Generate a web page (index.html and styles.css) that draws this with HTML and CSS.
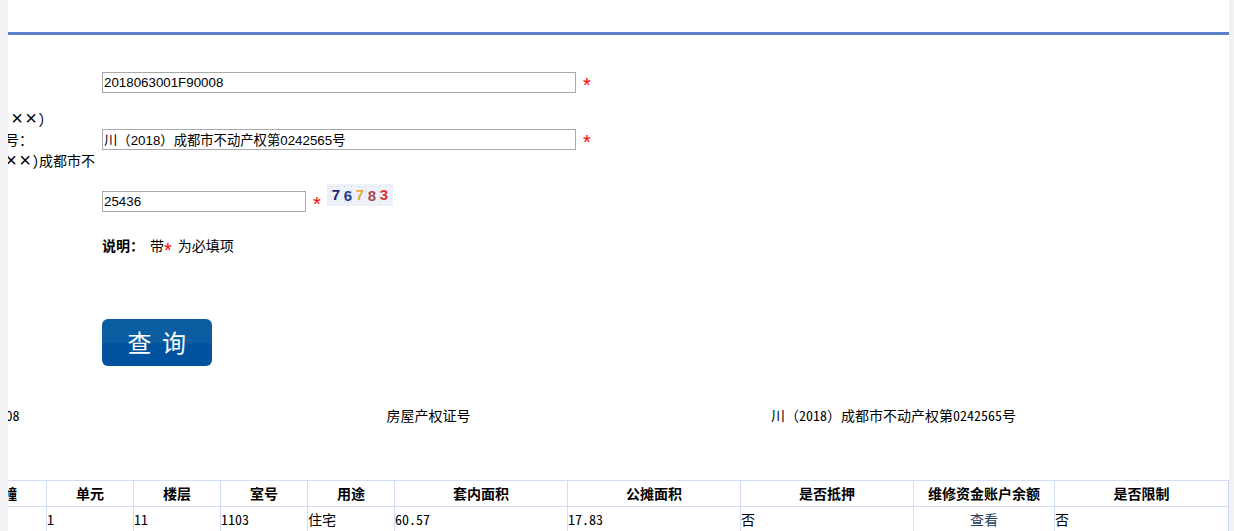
FILE: index.html
```html
<!DOCTYPE html>
<html lang="zh-CN">
<head>
<meta charset="utf-8">
<title>不动产权证查询</title>
<link rel="stylesheet" href="styles.css">
</head>
<body>
<main class="page">
  <header class="topbar"></header>
  <form class="form">
    <div class="row row-first">
      <div class="label"></div>
      <div class="field">
        <input class="input input-wide" value="2018063001F90008">
        <span class="req">*</span>
      </div>
    </div>
    <div class="row row-cert">
      <div class="label">
        <div class="label-line line-a"><span>(<span class="x">×</span><span class="x">×</span><span class="x">×</span><span class="x">×</span>)</span></div>
        <div class="label-line line-b"><span>不动产权证号：</span></div>
        <div class="label-line line-c"><span>(<span class="x">×</span><span class="x">×</span><span class="x">×</span><span class="x">×</span>)成都市不</span></div>
      </div>
      <div class="field">
        <input class="input input-wide" value="川（2018）成都市不动产权第0242565号">
        <span class="req">*</span>
      </div>
    </div>
    <div class="row row-code">
      <div class="label"></div>
      <div class="field">
        <input class="input input-short" value="25436">
        <span class="req">*</span>
        <div class="captcha">
          <span class="d1">7</span><span class="d2">6</span><span class="d3">7</span><span class="d4">8</span><span class="d5">3</span>
        </div>
      </div>
    </div>
    <div class="row row-note">
      <div class="label"></div>
      <div class="note"><b class="note-title">说明：</b><span>带</span><span class="note-star">*</span><span class="note-rest">为必填项</span></div>
    </div>
    <div class="row row-btn">
      <div class="label"></div>
      <button type="button" class="submit">查 询</button>
    </div>
  </form>

  <div class="info">
    <div>2018063001F90008</div>
    <div>房屋产权证号</div>
    <div>川（2018）成都市不动产权第0242565号</div>
  </div>

  <table class="grid">
    <colgroup>
      <col class="c87"><col class="c87"><col class="c87"><col class="c87"><col class="c87">
      <col class="c173"><col class="c173"><col class="c173"><col class="c141"><col class="c174">
    </colgroup>
    <thead>
      <tr><th>楼幢</th><th>单元</th><th>楼层</th><th>室号</th><th>用途</th><th>套内面积</th><th>公摊面积</th><th>是否抵押</th><th>维修资金账户余额</th><th>是否限制</th></tr>
    </thead>
    <tbody>
      <tr><td></td><td>1</td><td>11</td><td>1103</td><td>住宅</td><td>60.57</td><td>17.83</td><td>否</td><td class="link-cell">查看</td><td>否</td></tr>
    </tbody>
  </table>
</main>
</body>
</html>
```
FILE: styles.css
```css
html, body {
  margin: 0;
  padding: 0;
  height: 531px;
  overflow: hidden;
  background: #f2f2f5;
}
.page {
  margin: 0 5px 0 8px;
  height: 531px;
  overflow: hidden;
  background: #fff;
  color: #000;
  font: 14px/21px "Noto Sans Mono CJK SC", "Noto Sans CJK SC", "Liberation Mono", monospace;
}
.topbar {
  height: 32px;
  border-bottom: 3px solid #5b7fcb;
}
.form {
  padding-top: 37px;
}
.row {
  display: flex;
}
.label {
  width: 87px;
  margin-right: 7px;
  flex: none;
}
.label-line {
  display: flex;
  justify-content: flex-end;
  white-space: nowrap;
  overflow: hidden;
  height: 21px;
}
.line-a { padding-right: 50px; }
.line-b { padding-right: 62px; }
.x {
  display: inline-block;
  width: 14px;
  text-align: center;
  font-family: "Liberation Sans", sans-serif;
  font-size: 20px;
  font-weight: 300;
  line-height: 21px;
  vertical-align: top;
}
.field {
  display: flex;
  align-items: center;
  height: 21px;
}
.input {
  box-sizing: border-box;
  height: 21px;
  padding: 0 0 0 1px;
  border: 1px solid #a9a9a9;
  font: 13.33px "Liberation Sans", "Noto Sans CJK SC", sans-serif;
  color: #000;
  background: #fff;
  outline: none;
}
.input-wide { width: 474px; }
.input-short { width: 204px; }
.req {
  margin-left: 7px;
  color: #f00;
  font: 20px/21px "Liberation Sans", sans-serif;
  padding-top: 5px;
}
.row-first { height: 21px; }
.row-cert {
  margin-top: 15px;
  height: 63px;
}
.row-cert .field { margin-top: 21px; }
.row-code { margin-top: 20px; }
.captcha {
  display: flex;
  justify-content: space-around;
  align-items: center;
  box-sizing: border-box;
  width: 66px;
  height: 22px;
  margin: -13px 0 0 6px;
  padding: 0 3px;
  background-color: #ecf2f8;
  background-image: radial-gradient(#c4ccd6 0.6px, transparent 0.9px);
  background-size: 7px 5px;
  font: bold 15px/22px "Liberation Sans", sans-serif;
}
.d1 { color: #1c2482; }
.d2 { color: #1f3a8f; margin-top: 2px; }
.d3 { color: #e8a93c; }
.d4 { color: #a84a52; margin-top: 2px; }
.d5 { color: #d8303c; margin-top: -1px; }
.row-note { margin-top: 23px; }
.note {
  display: flex;
}
.note-title {
  width: 48px;
  font-weight: 700;
}
.note-star {
  color: #f00;
  font: 20px/21px "Liberation Sans", sans-serif;
  padding-top: 5px;
  height: 16px;
  margin-right: 6px;
}
.row-btn { margin-top: 63px; }
.submit {
  width: 110px;
  height: 47px;
  padding: 0 0 2px 2px;
  border: 0;
  border-radius: 6px;
  background: linear-gradient(#0a5da1 0, #0a5da1 50%, #01539f 50%, #01539f 100%);
  color: #fff;
  font: 24px/45px "Noto Sans CJK SC", sans-serif;
  letter-spacing: 2.5px;
}
.info {
  display: grid;
  grid-template-columns: repeat(3, 465px);
  margin: 39px 0 0 -277px;
  text-align: center;
  white-space: nowrap;
}
.grid {
  table-layout: fixed;
  width: 1270px;
  margin: 54px 0 0 -49px;
  border-collapse: collapse;
}
.c87 { width: 87px; }
.c173 { width: 173px; }
.c141 { width: 141px; }
.c174 { width: 174px; }
.grid th, .grid td {
  border: 1px solid #d2ddfa;
  padding: 0;
  height: 25px;
  line-height: 25px;
  text-align: left;
  white-space: nowrap;
}
.grid th {
  text-align: center;
  font-weight: 700;
}
.grid .link-cell {
  text-align: center;
  color: #1f3a5f;
}
```
